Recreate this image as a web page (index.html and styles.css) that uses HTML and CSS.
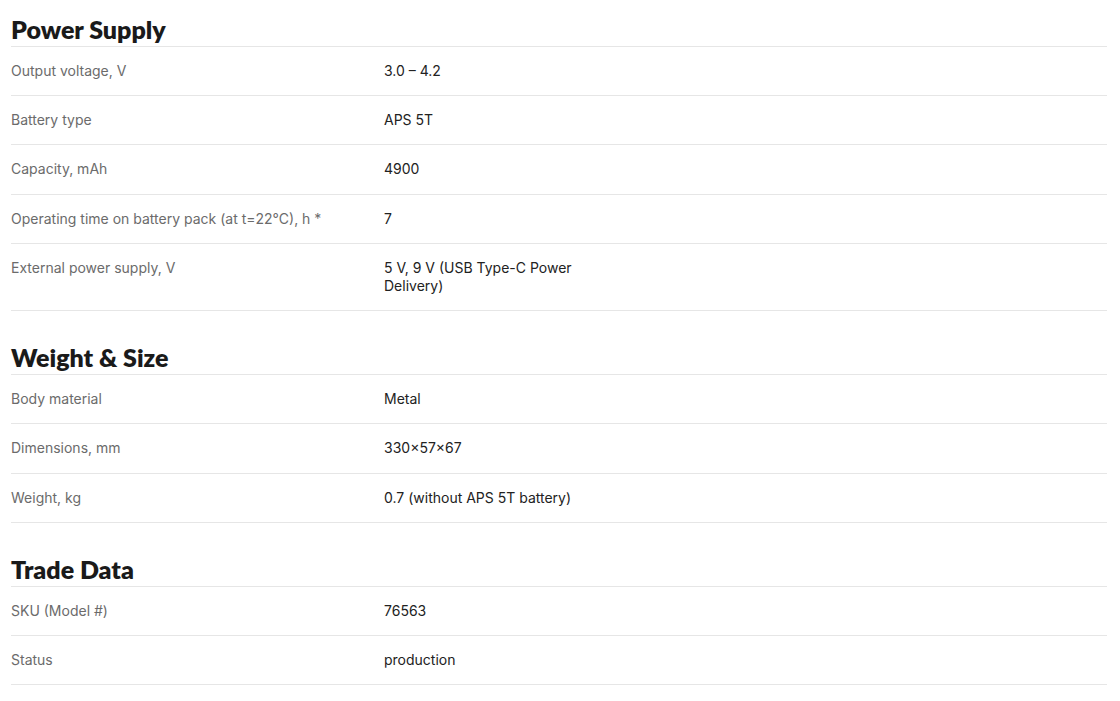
FILE: index.html
```html
<!DOCTYPE html>
<html>
<head>
  <meta charset="utf-8">
  <title>Specifications</title>
  <link rel="stylesheet" href="styles.css">
</head>
<body>
  <div class="specs">

    <div class="spec_group">
      <h2 class="group_title">Power Supply</h2>
      <div class="spec_row"><div class="spec_name">Output voltage, V</div><div class="spec_value">3.0 – 4.2</div></div>
      <div class="spec_row"><div class="spec_name">Battery type</div><div class="spec_value">APS 5T</div></div>
      <div class="spec_row"><div class="spec_name">Capacity, mAh</div><div class="spec_value">4900</div></div>
      <div class="spec_row"><div class="spec_name">Operating time on battery pack (at t=22°C), h *</div><div class="spec_value">7</div></div>
      <div class="spec_row"><div class="spec_name">External power supply, V</div><div class="spec_value">5 V, 9 V (USB Type-C Power Delivery)</div></div>
    </div>

    <div class="spec_group">
      <h2 class="group_title">Weight &amp; Size</h2>
      <div class="spec_row"><div class="spec_name">Body material</div><div class="spec_value">Metal</div></div>
      <div class="spec_row"><div class="spec_name">Dimensions, mm</div><div class="spec_value">330×57×67</div></div>
      <div class="spec_row"><div class="spec_name">Weight, kg</div><div class="spec_value">0.7 (without APS 5T battery)</div></div>
    </div>

    <div class="spec_group">
      <h2 class="group_title">Trade Data</h2>
      <div class="spec_row"><div class="spec_name">SKU (Model #)</div><div class="spec_value">76563</div></div>
      <div class="spec_row"><div class="spec_name">Status</div><div class="spec_value">production</div></div>
    </div>

  </div>
</body>
</html>
```

FILE: styles.css
```css
body{
    margin: 0;
    background-color: #fff;
    font-family: Inter, Roboto, "Liberation Sans", sans-serif;
}

.specs{
    padding: 0 13px 0 11px;
}

.spec_group + .spec_group{
    margin-top: 17px;
}

.group_title{
    margin: 0;
    padding: 15px 0 3px;
    font-family: Lato, "DejaVu Sans", sans-serif;
    font-weight: 800;
    font-size: 25px;
    line-height: 28px;
    color: #1a1a1a;
    border-bottom: 1px solid #e6e6e6;
}

.spec_row{
    display: grid;
    grid-template-columns: 373px 215px;
    padding: 15px 0;
    font-size: 14px;
    line-height: 18.2px;
    border-bottom: 1px solid #e6e6e6;
}

.spec_name{
    color: #6b6b6b;
}

.spec_value{
    color: #222;
}
```
